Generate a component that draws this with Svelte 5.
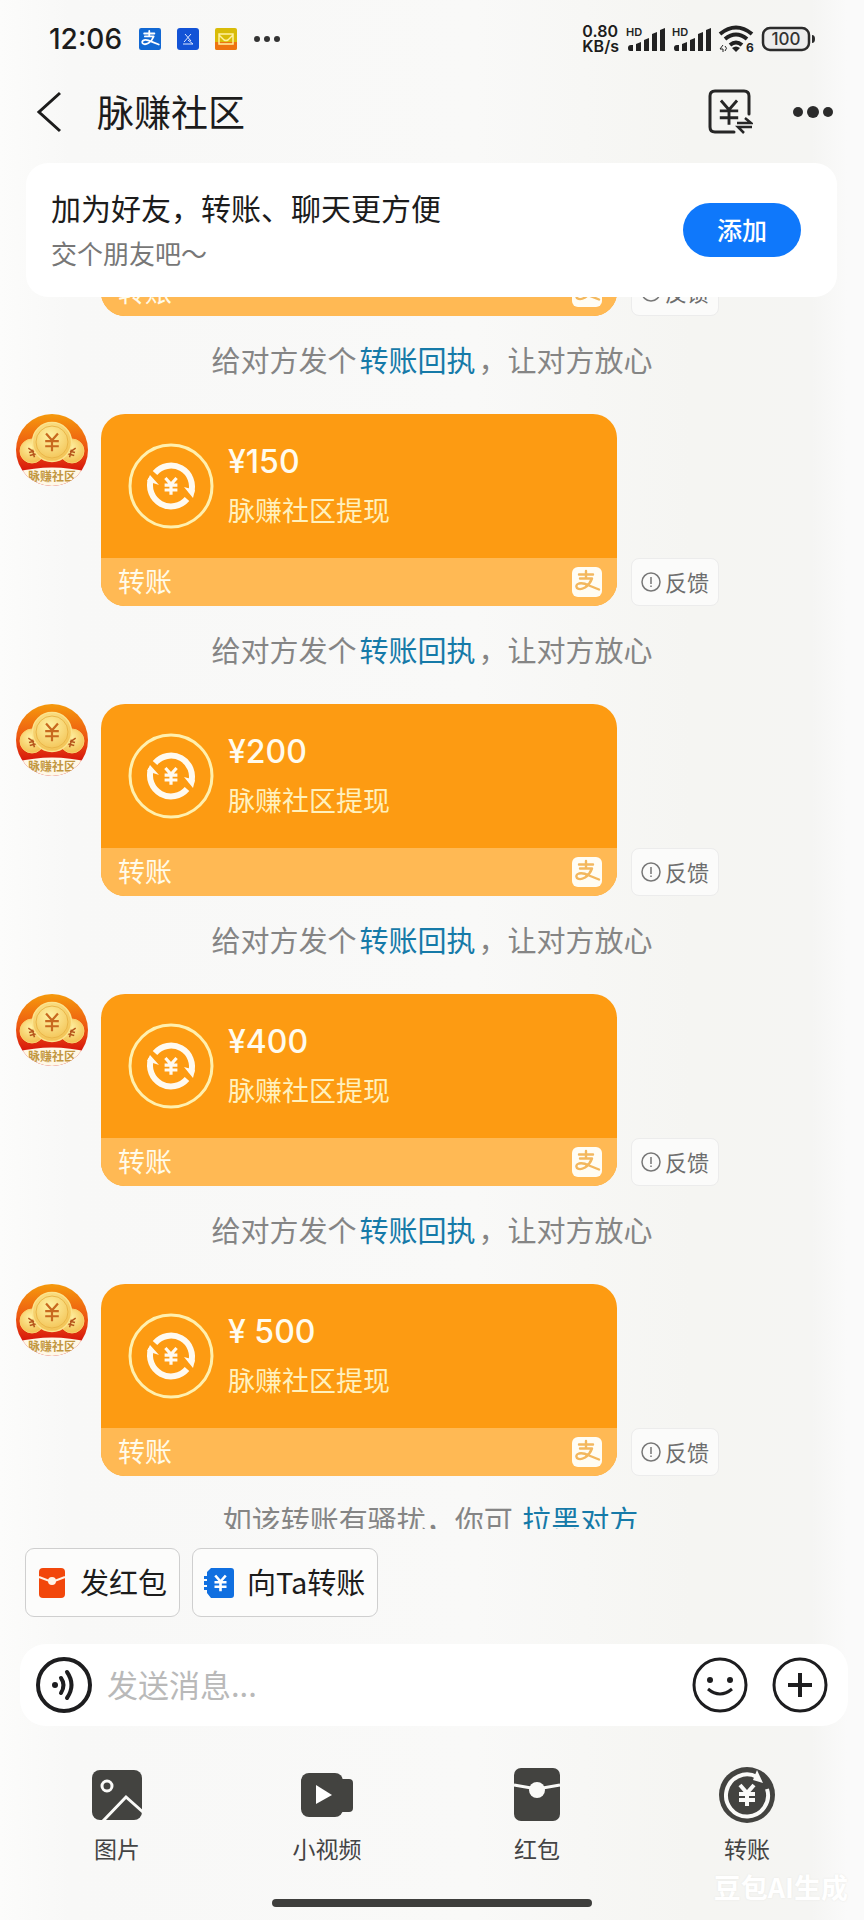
<script>
  const transfers = [
    { id: 1, amount: '' },
    { id: 2, amount: '¥150' },
    { id: 3, amount: '¥200' },
    { id: 4, amount: '¥400' },
    { id: 5, amount: '¥ 500' }
  ];
  const tools = [
    { id: 'photo', label: '图片' },
    { id: 'video', label: '小视频' },
    { id: 'packet', label: '红包' },
    { id: 'transfer', label: '转账' }
  ];
  let message = $state('');
</script>

{#snippet yen()}
  <path d="M-7 -10 L0 -2 L7 -10 M0 -2 V11 M-8 -1 H8 M-8 5 H8" fill="none" />
{/snippet}

{#snippet payLogo()}
  <path d="M7 7.5 H21 M14 4 V11.5 M8 11.5 H20 Q18 17 13 20.5 Q8 23.5 5 21 Q3 18 7 16.5 Q11 15.5 17 18.5 L27 22.5" fill="none" stroke-width="2.4" stroke-linecap="round" stroke-linejoin="round" />
{/snippet}

{#snippet avatar(n)}
  <svg class="avatar" viewBox="0 0 72 72" aria-hidden="true">
    <defs>
      <linearGradient id="sky{n}" x1="0" y1="0" x2="0" y2="1">
        <stop offset="0" stop-color="#f59a0c" />
        <stop offset=".45" stop-color="#ee5a12" />
        <stop offset=".8" stop-color="#d6130c" />
      </linearGradient>
      <radialGradient id="coin{n}" cx=".45" cy=".35" r=".7">
        <stop offset="0" stop-color="#fff2a4" />
        <stop offset="1" stop-color="#f1bd4c" />
      </radialGradient>
      <clipPath id="disc{n}"><circle cx="36" cy="36" r="36" /></clipPath>
    </defs>
    <g clip-path="url(#disc{n})">
      <rect width="72" height="72" fill="url(#sky{n})" />
      <path d="M0 58 Q36 49 72 58 V72 H0 Z" fill="#fff8e6" />
      <circle cx="16" cy="37" r="12" fill="url(#coin{n})" stroke="#f8d271" />
      <circle cx="56" cy="37" r="12" fill="url(#coin{n})" stroke="#f8d271" />
      <g stroke="#b5541b" stroke-width="3" transform="translate(17 38) rotate(-15) scale(.5)">{@render yen()}</g>
      <g stroke="#b5541b" stroke-width="3" transform="translate(55 38) rotate(15) scale(.5)">{@render yen()}</g>
      <circle cx="36" cy="28" r="19.500" fill="url(#coin{n})" stroke="#fbe48e" stroke-width="1.500" />
      <circle cx="36" cy="28" r="16" fill="none" stroke="#e9b548" />
      <g stroke="#c8691f" stroke-width="2.600" transform="translate(36 28) scale(.85)">{@render yen()}</g>
      <text x="36" y="67" text-anchor="middle" class="avatar-name">脉赚社区</text>
    </g>
  </svg>
{/snippet}

<main class="phone">
  <header class="status">
    <div class="group">
      <time class="clock">12:06</time>
      <div class="apps">
        <svg width="22" height="22" viewBox="0 0 30 30"><rect width="30" height="30" rx="3" fill="#1268d3" /><g stroke="#fff">{@render payLogo()}</g></svg>
        <svg width="22" height="22" viewBox="0 0 22 22"><rect width="22" height="22" rx="3" fill="#1353d6" /><path d="M8 6 L14 13 M14 6 L7 14 M6 16 H16 M11 12 L16 16" stroke="#dfe9ff" fill="none" /></svg>
        <svg width="22" height="22" viewBox="0 0 22 22"><rect width="22" height="22" rx="2" fill="#d9bc08" /><path d="M0 14 H22 V20 Q22 22 20 22 H2 Q0 22 0 20 Z" fill="#ee7411" /><path d="M4 6 H18 V16 H4 Z M4 7 L9 12 Q11 13 13 12 L18 7" stroke="#fff1a0" stroke-width="1.500" fill="none" /></svg>
      </div>
      <svg width="26" height="8" viewBox="0 0 26 8" fill="#333"><circle cx="3" cy="4" r="3" /><circle cx="13" cy="4" r="3" /><circle cx="23" cy="4" r="3" /></svg>
    </div>
    <div class="group right">
      <div class="speed"><span>0.80</span><span>KB/s</span></div>
      {#each [1, 2] as sim (sim)}
        <svg width="39" height="26" viewBox="0 0 39 26" fill="#222">
          <text x="0" y="10" class="hd">HD</text>
          <path d="M2 22 q0 -3 3 -3 h2 v6 h-3 q-2 0 -2 -3z M10 18 l5 -2 v9 h-5z M18 14 l5 -2 v13 h-5z M26 8 l5 -2 v19 h-5z M34 4 l5 -2 v23 h-5z" />
        </svg>
      {/each}
      <svg width="36" height="28" viewBox="0 0 36 28" fill="none" stroke="#222" stroke-width="4">
        <path d="M2 9 Q18 -4 34 9 M7 14 Q18 5 29 14 M12 20 Q18 15 24 20" />
        <path d="M14 23 Q18 20 22 23 L18 27 Z" fill="#222" stroke="none" />
        <path d="M5 20 l-3 4 h3 v3 M7 21 q3 2 0 5" stroke-width="1" />
        <text x="28" y="27" class="wifi">6</text>
      </svg>
      <svg width="54" height="26" viewBox="0 0 54 26">
        <rect x="2" y="2" width="46" height="22" rx="7" fill="#ededed" stroke="#2b2b2b" stroke-width="2.500" />
        <path d="M51 9 q3 0 3 4 t-3 4z" fill="#2b2b2b" />
        <text x="25" y="19" text-anchor="middle" class="level">100</text>
      </svg>
    </div>
  </header>

  <nav class="nav">
    <button class="plain" aria-label="返回">
      <svg width="26" height="42" viewBox="0 0 26 42"><path d="M24 2 L3 21 L24 40" fill="none" stroke="#1c1c1c" stroke-width="3" /></svg>
    </button>
    <h1>脉赚社区</h1>
    <div class="actions">
      <button class="plain" aria-label="收付款">
        <svg width="46" height="48" viewBox="0 0 46 48" fill="none" stroke="#262626" stroke-width="3">
          <path d="M27 44 H8 Q3 44 3 39 V8 Q3 3 8 3 H37 Q42 3 42 8 V26" stroke-linecap="round" />
          <g transform="translate(22 24) scale(1.150)" stroke-width="2.500">{@render yen()}</g>
          <path d="M30 35 H44 L38 30 M45 39 H31 L37 45" stroke-width="2.500" />
        </svg>
      </button>
      <button class="plain" aria-label="更多">
        <svg width="40" height="14" viewBox="0 0 40 14" fill="#2b2b2b"><circle cx="5" cy="7" r="5" /><circle cx="20" cy="7" r="6" /><circle cx="35" cy="7" r="5" /></svg>
      </button>
    </div>
  </nav>

  <section class="banner">
    <div>
      <h2>加为好友，转账、聊天更方便</h2>
      <p>交个朋友吧～</p>
    </div>
    <button class="add">添加</button>
  </section>

  <section class="chat">
    <div class="list">
      {#each transfers as transfer, i (transfer.id)}
        <article class="message">
          {@render avatar(transfer.id)}
          <div class="card">
            <div class="body">
              {#if transfer.amount}
                <svg class="ring" viewBox="0 0 86 86" fill="none">
                  <circle cx="43" cy="43" r="41" stroke="#fff0ae" stroke-width="3" />
                  <path d="M27 30 A21 21 0 0 1 63 50 M59 56 A21 21 0 0 1 23 36" stroke="#fffaf0" stroke-width="6" />
                  <path d="M56 44 L67 47 L65 55 Z M19 38 L22 32 L31 42 Z" fill="#fffaf0" />
                  <g transform="translate(43 43) scale(.8)" stroke="#fffaf0" stroke-width="4">{@render yen()}</g>
                </svg>
                <div class="info">
                  <strong>{transfer.amount}</strong>
                  <span>脉赚社区提现</span>
                </div>
              {/if}
            </div>
            <div class="foot">
              <span>转账</span>
              <svg width="30" height="30" viewBox="0 0 30 30"><rect width="30" height="30" rx="6" fill="#fffdf4" /><g stroke="#f3b85e">{@render payLogo()}</g></svg>
            </div>
          </div>
          <button class="feedback">
            <svg width="20" height="20" viewBox="0 0 20 20" fill="none" stroke="#777" stroke-width="1.500"><circle cx="10" cy="10" r="9" /><path d="M10 5 V12 M10 13.500 V15" /></svg>
            <span>反馈</span>
          </button>
        </article>
        {#if i < transfers.length - 1}
          <p class="hint">给对方发个<a href="#receipt">转账回执</a>，让对方放心</p>
        {:else}
          <p class="hint">如该转账有骚扰，你可 <a href="#block">拉黑对方</a></p>
        {/if}
      {/each}
    </div>
  </section>

  <div class="quick">
    <button>
      <svg width="30" height="30" viewBox="0 0 30 30"><rect x="2" width="26" height="30" rx="4" fill="#f2470b" /><path d="M2 9 L15 14 L28 9" stroke="#fff3e6" stroke-width="2" fill="none" /><circle cx="15" cy="13" r="4" fill="#fff3e6" /></svg>
      <span>发红包</span>
    </button>
    <button>
      <svg width="30" height="30" viewBox="0 0 30 30"><path d="M7 0 H27 Q30 0 30 3 V27 Q30 30 27 30 H7 L3 25 V22 H0 V19 H3 V17 H0 V13 H3 V11 H0 V8 H3 V4 Z" fill="#106fe0" /><g transform="translate(16.500 15) scale(.75)" stroke="#fff" stroke-width="3.500">{@render yen()}</g></svg>
      <span>向Ta转账</span>
    </button>
  </div>

  <form class="composer" onsubmit={(e) => e.preventDefault()}>
    <button class="plain" type="button" aria-label="语音">
      <svg width="56" height="56" viewBox="0 0 56 56" fill="none" stroke="#1d1d1f">
        <circle cx="28" cy="28" r="26" stroke-width="4" />
        <circle cx="19" cy="28" r="3" fill="#1d1d1f" stroke="none" />
        <path d="M25 21 Q30 28 25 36 M31 15 Q40 28 31 41" stroke-width="4" stroke-linecap="round" />
      </svg>
    </button>
    <input type="text" aria-label="发送消息" placeholder="发送消息..." bind:value={message} />
    <button class="plain" type="button" aria-label="表情">
      <svg width="56" height="56" viewBox="0 0 56 56" fill="none" stroke="#1d1d1f">
        <circle cx="28" cy="28" r="26" stroke-width="3" />
        <circle cx="18" cy="23" r="3" fill="#1d1d1f" stroke="none" />
        <circle cx="38" cy="23" r="3" fill="#1d1d1f" stroke="none" />
        <path d="M16 32 Q28 42 40 32" stroke-width="3" />
      </svg>
    </button>
    <button class="plain" type="button" aria-label="添加更多">
      <svg width="56" height="56" viewBox="0 0 56 56" fill="none" stroke="#1d1d1f">
        <circle cx="28" cy="28" r="26" stroke-width="3" />
        <path d="M28 16 V40 M16 28 H40" stroke-width="4" />
      </svg>
    </button>
  </form>

  <div class="tools">
    {#each tools as tool (tool.id)}
      <button class="plain">
        <svg width="56" height="56" viewBox="0 0 56 56" fill="#434340">
          {#if tool.id === 'photo'}
            <rect x="3" y="3" width="50" height="50" rx="8" />
            <circle cx="18" cy="19" r="5" fill="none" stroke="#fafaf8" stroke-width="3" />
            <path d="M14 54 L37 30 L55 46" fill="none" stroke="#fafaf8" stroke-width="3" />
          {:else if tool.id === 'video'}
            <rect x="2" y="6" width="42" height="44" rx="8" />
            <rect x="38" y="12" width="16" height="33" rx="4" />
            <path d="M17 18 L33 28 L17 37 Z" fill="#fff" />
          {:else if tool.id === 'packet'}
            <rect x="5" y="1" width="46" height="53" rx="7" />
            <path d="M5 18 L28 22 L51 18" fill="none" stroke="#fafaf8" stroke-width="3" />
            <circle cx="28" cy="23" r="8" fill="#fafaf8" />
          {:else}
            <circle cx="28" cy="28" r="28" />
            <path d="M48 22 A21 21 0 1 1 38 10" fill="none" stroke="#fafaf8" stroke-width="4" />
            <path d="M38 3 L44 16 L34 13 Z" fill="#fafaf8" />
            <g transform="translate(28 28)" stroke="#fafaf8" stroke-width="4">{@render yen()}</g>
          {/if}
        </svg>
        <span>{tool.label}</span>
      </button>
    {/each}
  </div>

  <div class="home"></div>
  <span class="mark">豆包AI生成</span>
</main>

<style>
  :global(body) {
    margin: 0;
  }
  * {
    box-sizing: border-box;
  }
  .phone {
    position: relative;
    display: flex;
    flex-direction: column;
    height: 100vh;
    overflow: hidden;
    background: linear-gradient(90deg, #fcfcfb 0, #f8f8f7 8%, #f9f9f8 55%, #f5f5f2 80%, #f5f5f3 94%, #fafafa 98%);
    font-family: 'Noto Sans CJK SC', sans-serif;
    color: #1c1c1c;
  }
  svg {
    display: block;
    flex: none;
  }
  h1,
  h2,
  p {
    margin: 0;
    font-weight: 400;
  }
  button {
    font: inherit;
    color: inherit;
    cursor: pointer;
  }
  .plain {
    padding: 0;
    border: 0;
    background: none;
  }
  a {
    color: #167aa8;
    text-decoration: none;
  }

  .status {
    display: flex;
    justify-content: space-between;
    align-items: center;
    height: 78px;
    padding: 0 49px;
    font-family: Inter, sans-serif;
  }
  .group {
    display: flex;
    align-items: center;
    gap: 17px;
  }
  .clock {
    font-size: 28px;
    font-weight: 500;
  }
  .apps {
    display: flex;
    gap: 16px;
  }
  .right {
    gap: 7px;
  }
  .speed {
    display: flex;
    flex-direction: column;
    font-size: 16px;
    line-height: 15px;
    font-weight: 600;
  }
  .hd {
    font: 600 11px Inter, sans-serif;
  }
  .wifi {
    font: 700 12px Inter, sans-serif;
    fill: #222;
    stroke: none;
  }
  .level {
    font: 500 17px Inter, sans-serif;
    fill: #333;
  }

  .nav {
    display: flex;
    align-items: center;
    height: 68px;
    padding: 0 31px 0 36px;
    gap: 35px;
  }
  .actions {
    display: flex;
    align-items: center;
    gap: 40px;
  }
  h1 {
    flex: 1;
    padding-bottom: 2px;
    font-size: 37px;
    line-height: 48px;
  }

  .banner {
    display: flex;
    align-items: center;
    justify-content: space-between;
    margin: 17px 27px 0 26px;
    height: 134px;
    padding: 0 36px 0 25px;
    border-radius: 22px;
    background: #fff;
    flex: none;
  }
  h2 {
    font-size: 30px;
    line-height: 46px;
  }
  .banner p {
    font-size: 26px;
    line-height: 46px;
    color: #777;
  }
  .add {
    width: 118px;
    height: 54px;
    padding: 0 0 2px;
    border: 0;
    border-radius: 27px;
    background: #0f78fb;
    color: #fff;
    font-size: 25px;
    font-weight: 500;
  }

  .chat {
    flex: 1 1 0;
    min-height: 0;
    display: flex;
    flex-direction: column;
    justify-content: flex-end;
    overflow: hidden;
  }
  .list {
    margin-bottom: -45px;
  }
  .message {
    display: flex;
    padding: 0 16px;
  }
  .avatar {
    width: 72px;
    height: 72px;
    margin-right: 13px;
  }
  .avatar-name {
    font-size: 12px;
    font-weight: 700;
    fill: #c2963f;
  }
  .card {
    flex: 0 1 516px;
    overflow: hidden;
    border-radius: 24px;
    background: #fd9b12;
  }
  .body {
    display: flex;
    align-items: center;
    gap: 14px;
    height: 144px;
    padding-left: 27px;
  }
  .ring {
    width: 86px;
    height: 86px;
  }
  .info {
    display: flex;
    flex-direction: column;
    gap: 2px;
  }
  .info strong {
    font: 500 32px/46px Inter, sans-serif;
    color: #fffbee;
  }
  .info span {
    font-size: 27px;
    line-height: 46px;
    color: #fff1bd;
  }
  .foot {
    display: flex;
    align-items: center;
    justify-content: space-between;
    height: 48px;
    padding: 0 15px 0 17px;
    background: #ffb954;
    color: #fffbe9;
    font-size: 27px;
  }
  .foot span,
  .feedback span,
  .quick span {
    padding-bottom: 3px;
  }
  .feedback {
    display: flex;
    align-items: center;
    align-self: flex-end;
    gap: 4px;
    height: 48px;
    margin-left: 14px;
    padding: 0 9px;
    border: 1px solid #ececec;
    border-radius: 8px;
    background: #fbfbfa;
    color: #6d6d6d;
    font-size: 22px;
    white-space: nowrap;
  }
  .hint {
    padding: 21px 0 33px;
    font-size: 29px;
    line-height: 44px;
    text-align: center;
    color: #858585;
  }
  .hint a {
    margin: 0 3px;
  }

  .quick {
    display: flex;
    gap: 12px;
    padding: 19px 25px 0;
  }
  .quick button {
    display: flex;
    align-items: center;
    gap: 13px;
    height: 69px;
    padding: 0 12px 0 11px;
    border: 1px solid #cfcfcf;
    border-radius: 9px;
    background: #fcfcfb;
    font-size: 29px;
  }

  .composer {
    display: flex;
    align-items: center;
    gap: 24px;
    height: 82px;
    margin: 27px 16px 0 20px;
    padding: 0 20px 0 16px;
    border-radius: 26px;
    background: #fff;
    flex: none;
  }
  .composer input {
    flex: 1;
    min-width: 0;
    margin-left: -9px;
    padding: 0 0 4px;
    border: 0;
    outline: 0;
    background: none;
    font: inherit;
    font-size: 31px;
    color: #1c1c1c;
  }
  .composer input::placeholder {
    color: #b9b9b9;
  }

  .tools {
    display: grid;
    grid-template-columns: repeat(4, 1fr);
    padding: 41px 12px 0;
  }
  .tools button {
    display: flex;
    flex-direction: column;
    align-items: center;
    gap: 10px;
    font-size: 23px;
    line-height: 30px;
    color: #444;
  }
  .home {
    width: 37%;
    height: 8px;
    margin: 36px auto 13px;
    border-radius: 4px;
    background: #3e3e3c;
    flex: none;
  }
  .mark {
    position: absolute;
    right: 16px;
    bottom: 13px;
    font-size: 27px;
    line-height: 40px;
    font-weight: 700;
    color: #fff;
    text-shadow: 0 0 2px #e6e6e2;
  }
</style>
